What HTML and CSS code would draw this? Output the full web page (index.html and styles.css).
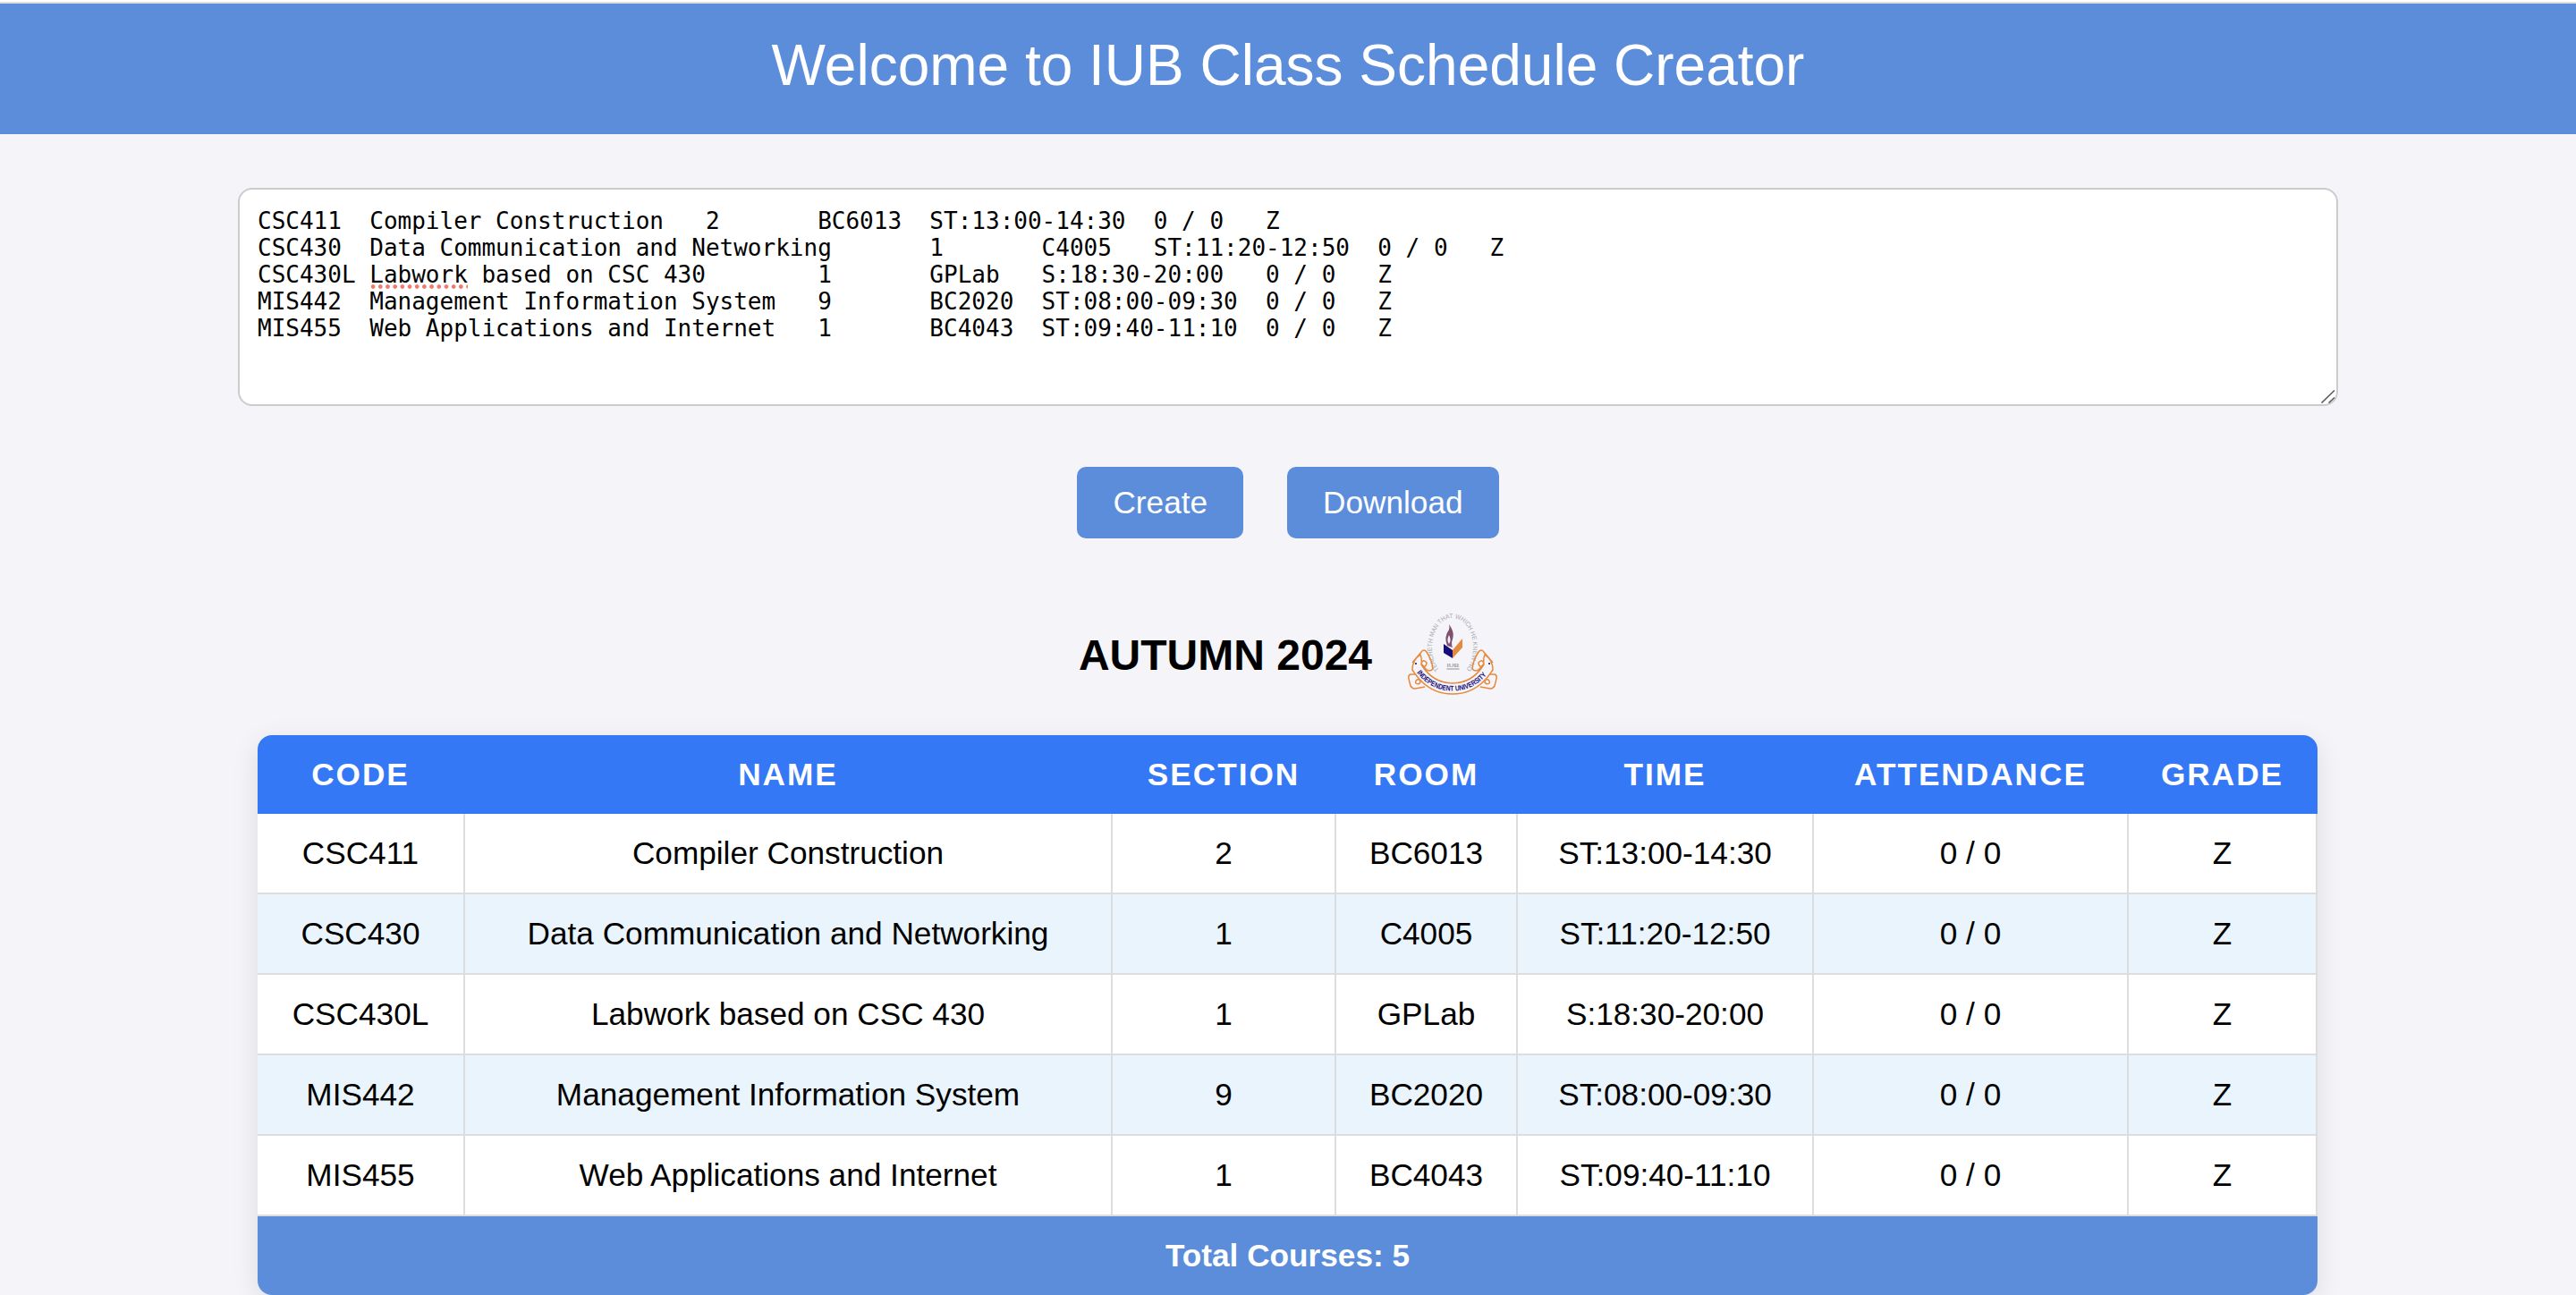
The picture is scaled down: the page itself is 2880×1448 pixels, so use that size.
FILE: index.html
```html
<!DOCTYPE html>
<html lang="en">
<head>
<meta charset="utf-8">
<title>IUB Class Schedule Creator</title>
<link rel="stylesheet" href="styles.css">
</head>
<body>
<header class="banner"><h1 class="banner-title">Welcome to IUB Class Schedule Creator</h1></header>
<main class="page">
<div class="input-box">
<pre class="input-text">CSC411	Compiler Construction	2	BC6013	ST:13:00-14:30	0 / 0	Z
CSC430	Data Communication and Networking	1	C4005	ST:11:20-12:50	0 / 0	Z
CSC430L	<span class="misspelled">Labwork</span> based on CSC 430	1	GPLab	S:18:30-20:00	0 / 0	Z
MIS442	Management Information System	9	BC2020	ST:08:00-09:30	0 / 0	Z
MIS455	Web Applications and Internet	1	BC4043	ST:09:40-11:10	0 / 0	Z</pre>
<svg class="resize-handle" width="18" height="18" viewBox="0 0 18 18" fill="none" stroke="#5a5a5a" stroke-width="1.6"><path d="M2.500 17.500L17 3.500M10.500 17.500L17 11.500"/></svg>
</div>
<div class="actions">
<button class="btn" type="button">Create</button>
<button class="btn" type="button">Download</button>
</div>
<div class="term">
<h2 class="term-title">AUTUMN 2024</h2>
<svg class="term-logo" width="100" height="100" viewBox="0 0 100 100">
<defs>
<path id="motto" d="M35 67A23 33 0 1 1 65 67"/>
<path id="ribbon-line" d="M10 70C30 97.500 70 97.500 90 70"/>
</defs>
<text class="motto-text"><textPath href="#motto" textLength="145" lengthAdjust="spacingAndGlyphs">TEACHETH MAN THAT WHICH HE KNEW NOT</textPath></text>
<g class="scroll">
<path d="M5 59L15 47Q18 43 21 47Q27 56 28 66Q24 70 20 66L15 60Q17 54 21 59Q21 63 17 64"/>
<path d="M95 59L85 47Q82 43 79 47Q73 56 72 66Q76 70 80 66L85 60Q83 54 79 59Q79 63 83 64"/>
<path d="M10 72H3Q0 73 1 77L3 85Q5 88 8 88L19 86M10 78Q14 77 14 81Q12 84 9 82Q8 80 10 78"/>
<path d="M90 72H97Q100 73 99 77L97 85Q95 88 92 88L81 86M90 78Q86 77 86 81Q88 84 91 82Q92 80 90 78"/>
<path class="ribbon" d="M14 50Q5 56 5 67Q22 94 50 94Q78 94 95 67Q95 56 86 50Q84 55 85 61Q72 82 50 82Q28 82 15 61Q16 55 14 50Z"/>
</g>
<text class="ribbon-text"><textPath href="#ribbon-line" textLength="90" lengthAdjust="spacingAndGlyphs">INDEPENDENT UNIVERSITY</textPath></text>
<circle cx="9" cy="60" r="1" fill="#170d78"/><circle cx="91" cy="60" r="1" fill="#170d78"/>
<path d="M40 38L50 45V54L40 48Z" fill="#170d78"/>
<path d="M50 45L61 32V42L50 54Z" fill="#e58a3c"/>
<path d="M46 16C52 25 51 28 50 33Q48 37 50 42L44 40Q40 30 46 22Q47 19 46 16M46 28Q43 34 46 38Q49 34 46 28" fill="#80506f" fill-rule="evenodd"/>
<text class="iub-text" x="50.500" y="64" text-anchor="middle" textLength="14" lengthAdjust="spacingAndGlyphs">IUB</text>
<path d="M43.500 66H57.500" stroke="#b3b3b5" stroke-width="1.500"/>
</svg>
</div>
<table class="schedule">
<colgroup><col class="c-code"><col class="c-name"><col class="c-section"><col class="c-room"><col class="c-time"><col class="c-att"><col class="c-grade"></colgroup>
<thead><tr><th>CODE</th><th>NAME</th><th>SECTION</th><th>ROOM</th><th>TIME</th><th>ATTENDANCE</th><th>GRADE</th></tr></thead>
<tbody>
<tr><td>CSC411</td><td>Compiler Construction</td><td>2</td><td>BC6013</td><td>ST:13:00-14:30</td><td>0 / 0</td><td>Z</td></tr>
<tr><td>CSC430</td><td>Data Communication and Networking</td><td>1</td><td>C4005</td><td>ST:11:20-12:50</td><td>0 / 0</td><td>Z</td></tr>
<tr><td>CSC430L</td><td>Labwork based on CSC 430</td><td>1</td><td>GPLab</td><td>S:18:30-20:00</td><td>0 / 0</td><td>Z</td></tr>
<tr><td>MIS442</td><td>Management Information System</td><td>9</td><td>BC2020</td><td>ST:08:00-09:30</td><td>0 / 0</td><td>Z</td></tr>
<tr><td>MIS455</td><td>Web Applications and Internet</td><td>1</td><td>BC4043</td><td>ST:09:40-11:10</td><td>0 / 0</td><td>Z</td></tr>
</tbody>
<tfoot><tr><td colspan="7">Total Courses: 5</td></tr></tfoot>
</table>
</main>
</body>
</html>
```
FILE: styles.css
```css
* { box-sizing: border-box; }
body {
  margin: 0;
  height: 1448px;
  overflow: hidden;
  background: #f4f4f9;
  font-family: "Liberation Sans", Arial, sans-serif;
  font-size: 35.2px;
  color: #000;
  border-top: 2px solid #fff;
}
.banner {
  height: 148px;
  border-top: 2px solid #e0e0e0;
  background: #5c8ddb;
  text-align: center;
}
.banner-title {
  margin: 0;
  padding-top: 32px;
  font-size: 64px;
  font-weight: 400;
  line-height: 74px;
  color: #fff;
}
.page {
  display: flex;
  flex-direction: column;
  align-items: center;
  padding-top: 60px;
}
.input-box {
  position: relative;
  width: 2348px;
  height: 244px;
  padding: 20px;
  border: 2px solid #ccc;
  border-radius: 16px;
  background: #fff;
}
.input-text {
  margin: 0;
  font: 26px/30px "DejaVu Sans Mono", monospace;
  tab-size: 8;
}
.misspelled {
  padding-bottom: 1px;
  background: radial-gradient(circle, #f4776e 2px, transparent 2.600px) left bottom / 8.200px 5px repeat-x;
}
.resize-handle { position: absolute; right: 1px; bottom: 1px; }
.actions {
  display: flex;
  gap: 49px;
  margin-top: 68px;
}
.btn {
  height: 80px;
  padding: 0 40px;
  border: 0;
  border-radius: 10px;
  background: #5c8ddb;
  color: #fff;
  font: inherit;
}
.term {
  display: flex;
  align-items: center;
  gap: 40px;
  height: 100px;
  margin-top: 80px;
}
.term-title { margin: 0; font-size: 48px; }
.term-logo { overflow: visible; }
.motto-text { font-size: 7px; fill: #a9a9ad; }
.scroll { fill: none; stroke: #e58a3c; stroke-width: 1.500; }
.ribbon { fill: #f4f4f9; }
.ribbon-text { font-size: 8.200px; font-weight: 700; fill: #170d78; }
.iub-text { font-size: 6px; font-weight: 700; fill: #a3a3a6; }
.schedule {
  width: 2303px;
  margin: 40px 1px 0 0;
  table-layout: fixed;
  border-collapse: separate;
  border-spacing: 0;
  border-radius: 16px;
  overflow: hidden;
  background: #fff;
  box-shadow: 0 8px 30px rgba(0, 0, 0, .1);
  text-align: center;
}
.c-code { width: 232px; }
.c-name { width: 724px; }
.c-section { width: 250px; }
.c-room { width: 203px; }
.c-time { width: 331px; }
.c-att { width: 352px; }
.c-grade { width: 211px; }
.schedule th {
  height: 88px;
  padding: 0 2px 0 0;
  background: #3478f6;
  color: #fff;
  letter-spacing: 2px;
}
.schedule td {
  height: 90px;
  padding: 0;
  border-right: 2px solid #ddd;
  border-bottom: 2px solid #ddd;
}
.schedule tbody tr:nth-child(even) { background: #eaf4fd; }
.schedule tfoot td {
  height: 88px;
  border: 0;
  background: #5c8ddb;
  color: #fff;
  font-weight: 700;
}
```
